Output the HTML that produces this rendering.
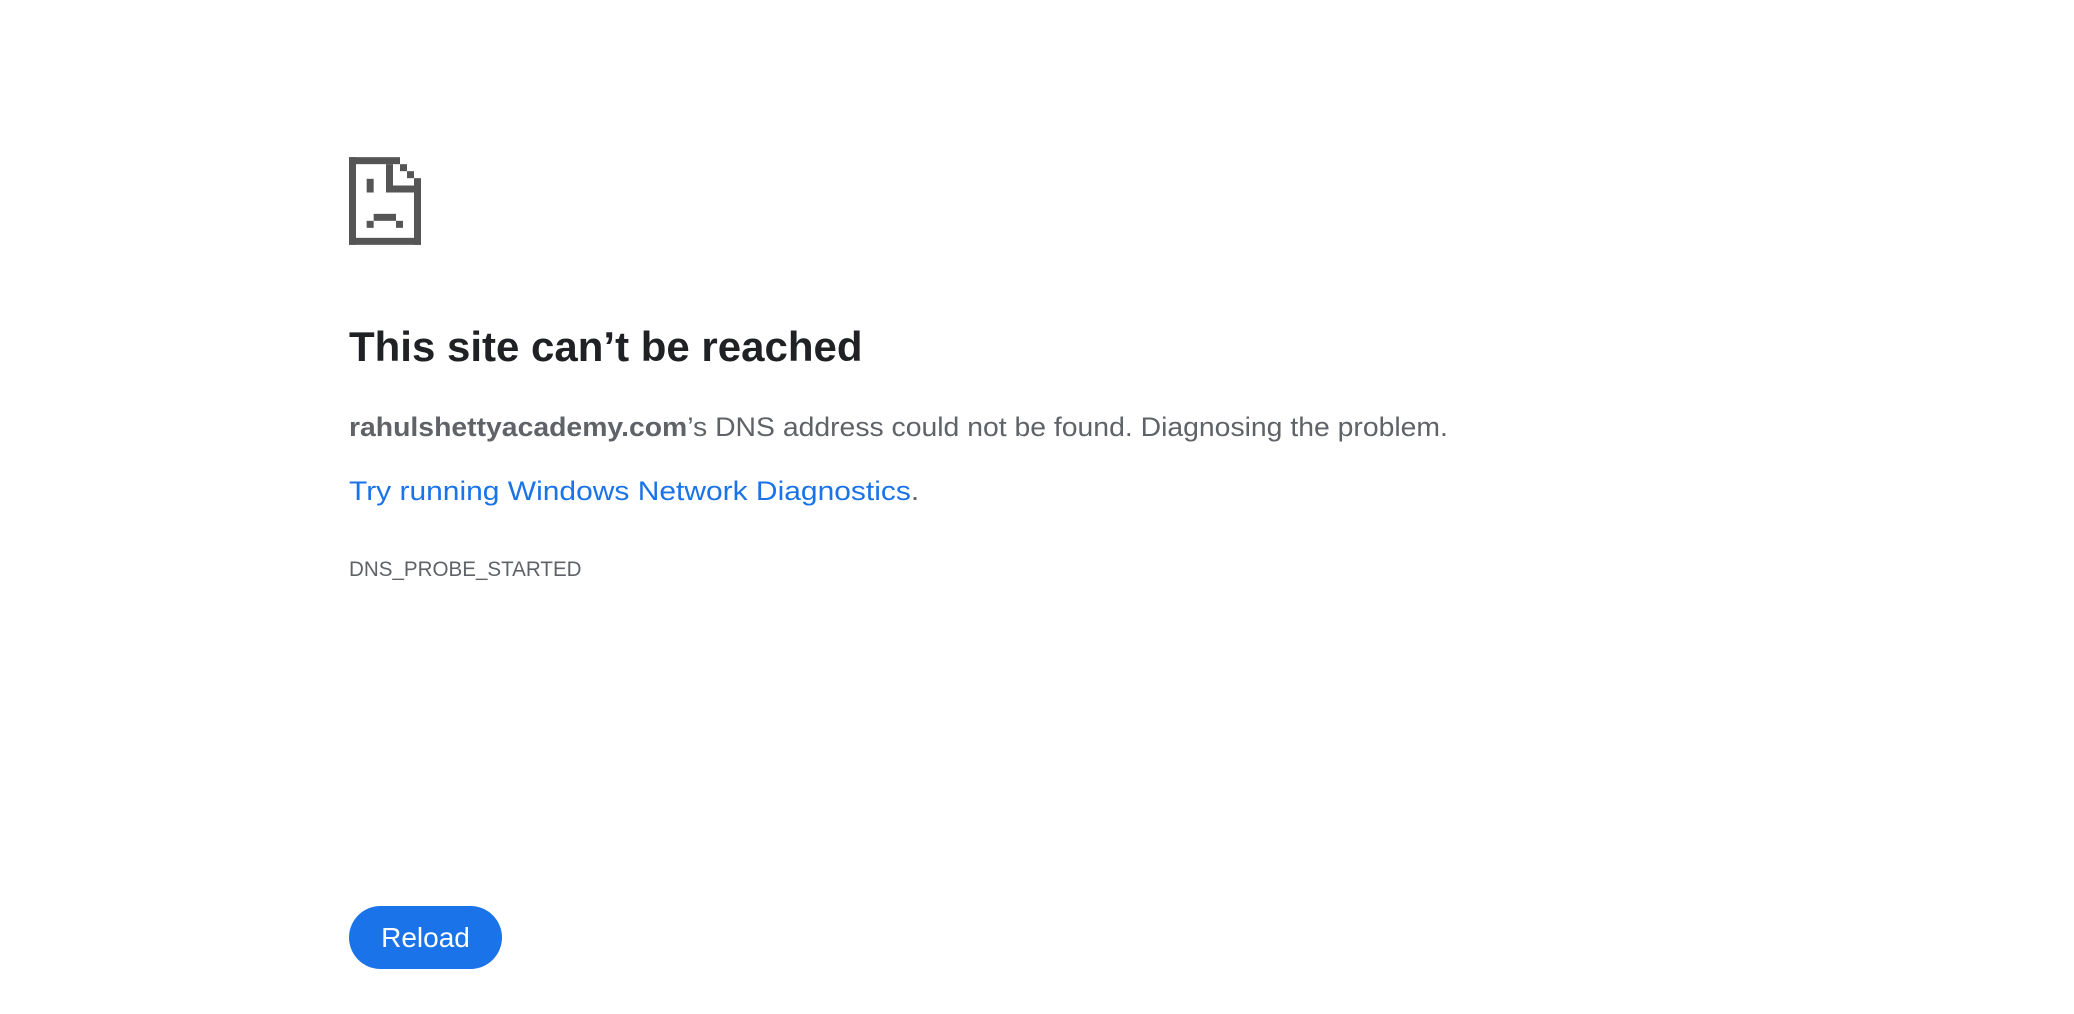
<!DOCTYPE html>
<html><head><meta charset="utf-8"><style>
html,body{margin:0;padding:0;background:#fff;width:2074px;height:1014px;overflow:hidden;font-family:"Liberation Sans",sans-serif}
.a{position:absolute;left:349px;white-space:nowrap;transform-origin:0 0}
h1{margin:0;font-size:42px;font-weight:bold;color:#202124;line-height:1}
.b{font-size:27px;color:#5f6368;line-height:1}
.l{font-size:27px;color:#1a73e8;line-height:1}
.d{font-size:21px;color:#5f6368;line-height:1}
.btn{position:absolute;left:349px;top:906px;width:153px;height:63px;border-radius:32px;background:#1a73e8;color:#fff;font-size:28px;line-height:63px;text-align:center}
</style></head><body>
<svg class="a" style="top:157px" width="72" height="88" viewBox="57 22 216 263">
<g fill="#555">
<rect x="57" y="22" width="153" height="21"/>
<rect x="57" y="22" width="21" height="263"/>
<rect x="57" y="264" width="216" height="21"/>
<rect x="252" y="85" width="21" height="200"/>
<rect x="210" y="43" width="21" height="21"/>
<rect x="231" y="64" width="21" height="21"/>
<rect x="168" y="43" width="21" height="85"/>
<rect x="168" y="107" width="105" height="21"/>
<rect x="110" y="87" width="21" height="41"/>
<rect x="131" y="192" width="67" height="21"/>
<rect x="110" y="213" width="21" height="21"/>
<rect x="198" y="213" width="21" height="21"/>
</g></svg>
<h1 class="a" style="top:326px">This site can’t be reached</h1>
<div class="a b" style="top:414px;transform:scaleX(1.05)"><b>rahulshettyacademy.com</b>’s DNS address could not be found. Diagnosing the problem.</div>
<div class="a l" style="top:478px;transform:scaleX(1.11)">Try running Windows Network Diagnostics<span style="color:#5f6368">.</span></div>
<div class="a d" style="top:559px;transform:scaleX(0.98)">DNS_PROBE_STARTED</div>
<div class="btn">Reload</div>
</body></html>
